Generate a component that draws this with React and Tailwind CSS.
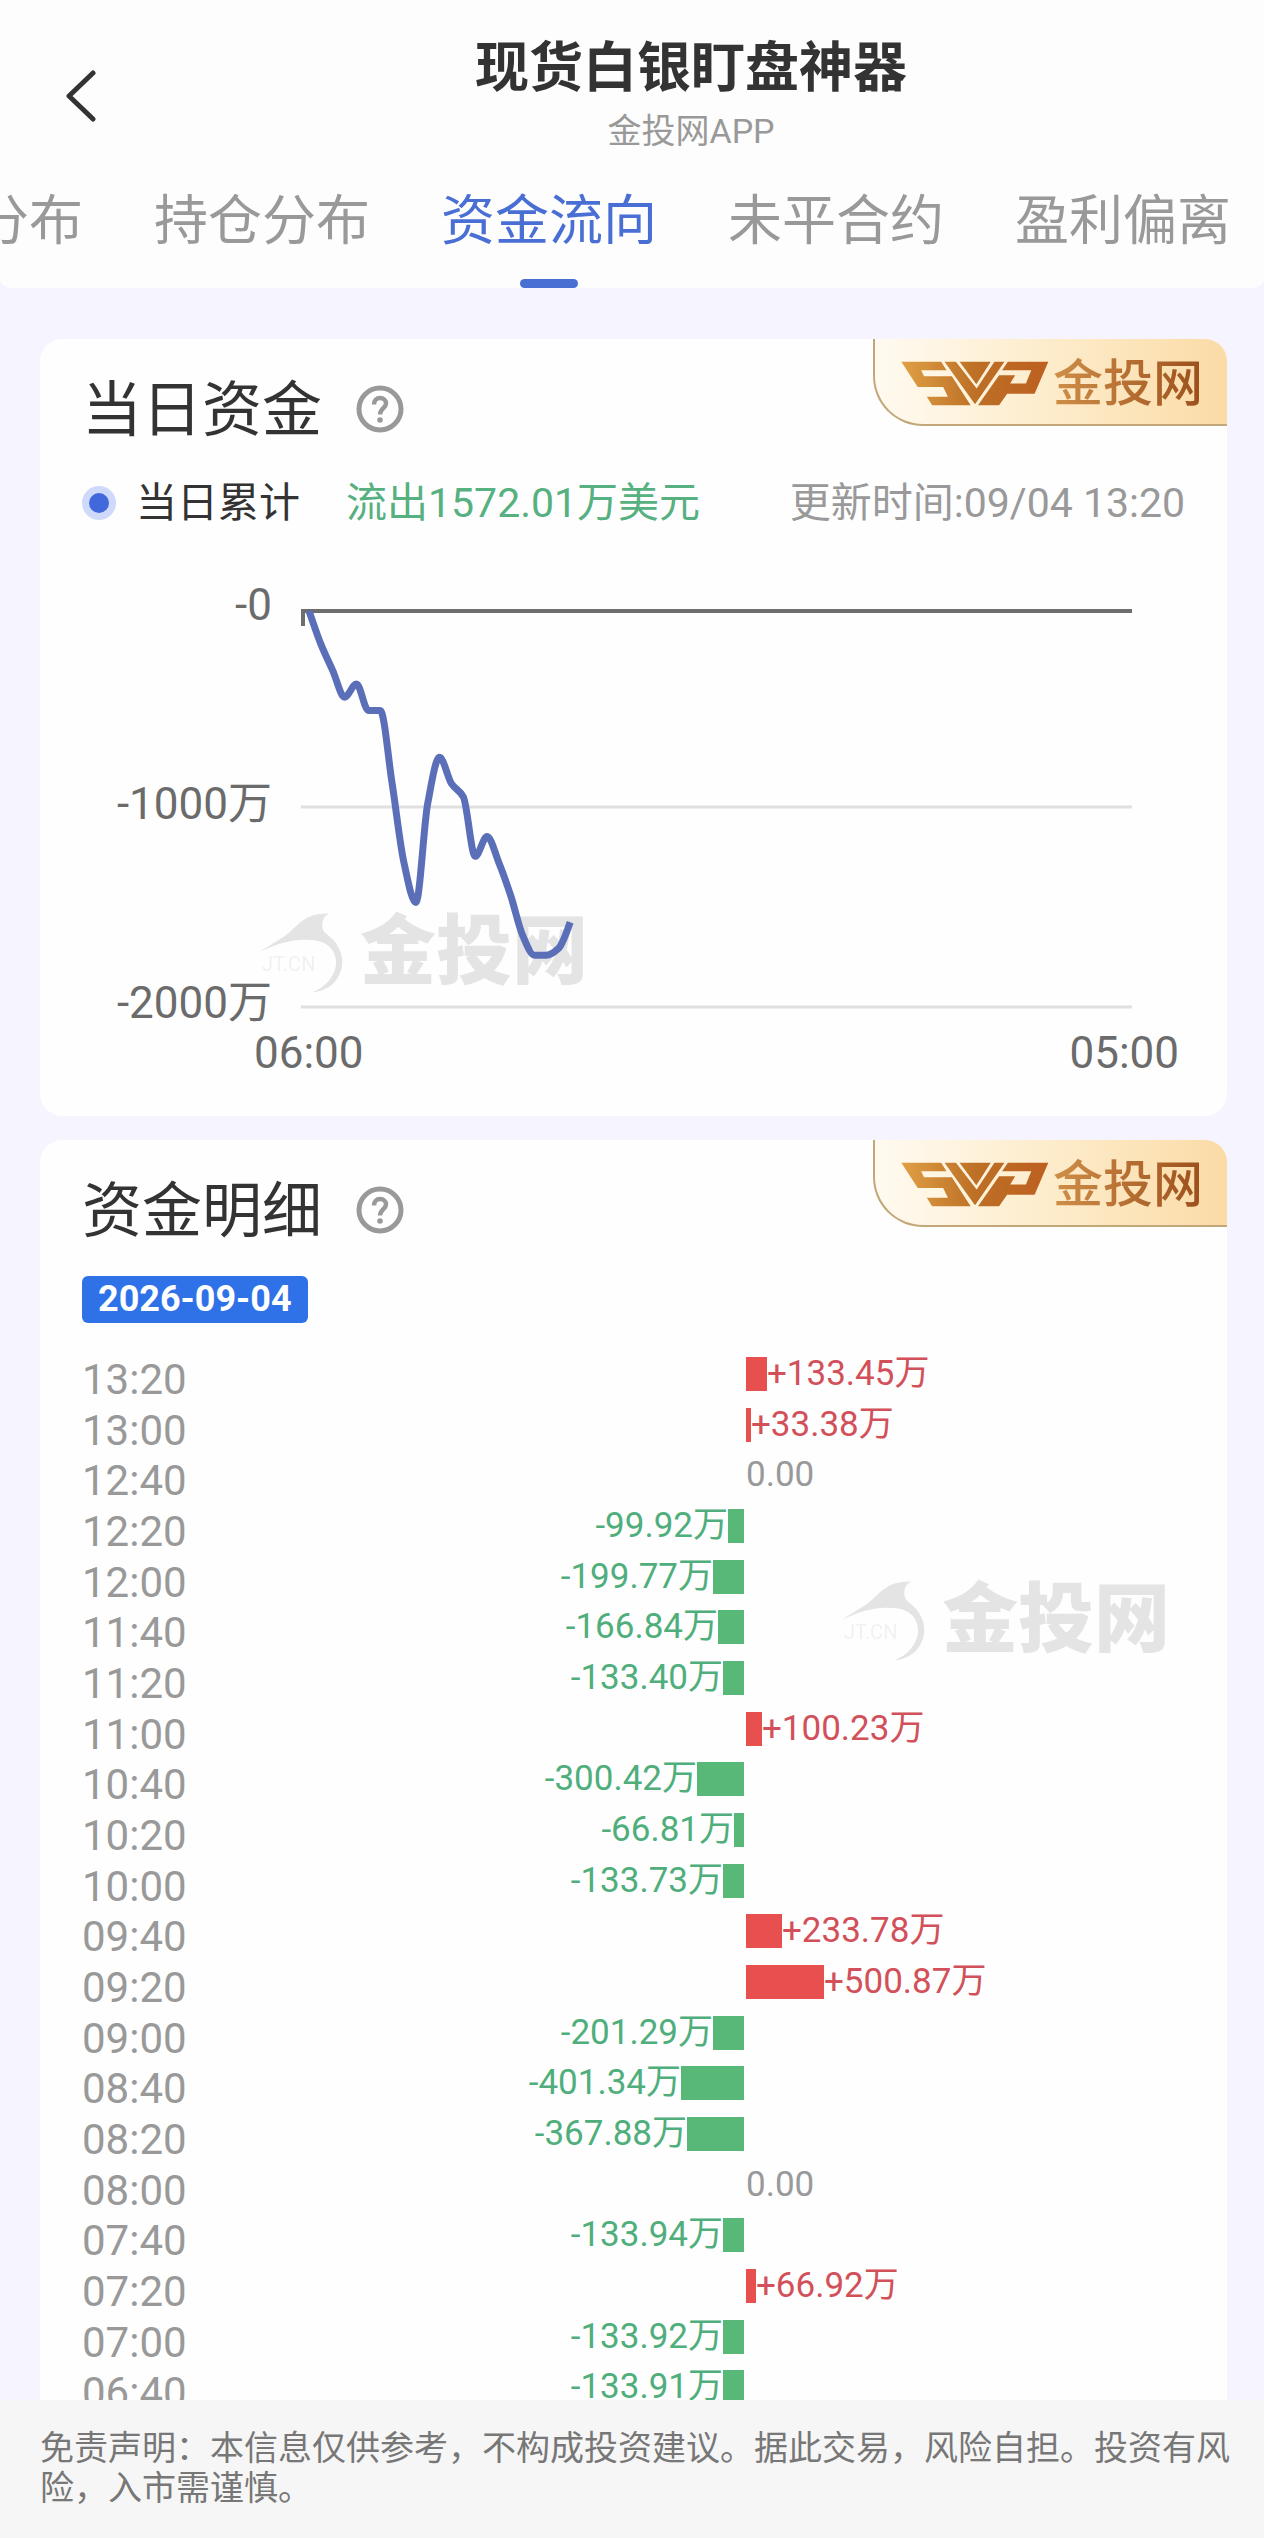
import React, { useState } from 'react';

const TABS = ['分布', '持仓分布', '资金流向', '未平合约', '盈利偏离'];

// newest first, unit: 万
const FLOWS = [
  { time: '13:20', value: 133.45 },
  { time: '13:00', value: 33.38 },
  { time: '12:40', value: 0 },
  { time: '12:20', value: -99.92 },
  { time: '12:00', value: -199.77 },
  { time: '11:40', value: -166.84 },
  { time: '11:20', value: -133.4 },
  { time: '11:00', value: 100.23 },
  { time: '10:40', value: -300.42 },
  { time: '10:20', value: -66.81 },
  { time: '10:00', value: -133.73 },
  { time: '09:40', value: 233.78 },
  { time: '09:20', value: 500.87 },
  { time: '09:00', value: -201.29 },
  { time: '08:40', value: -401.34 },
  { time: '08:20', value: -367.88 },
  { time: '08:00', value: 0 },
  { time: '07:40', value: -133.94 },
  { time: '07:20', value: 66.92 },
  { time: '07:00', value: -133.92 },
  { time: '06:40', value: -133.91 },
];

// running totals from 06:00 on
const TOTALS = [0, -167.47];
[...FLOWS].reverse().forEach((f) => {
  TOTALS.push(TOTALS[TOTALS.length - 1] + f.value);
});

const STEP = 831 / 70;
const POINTS = TOTALS.map((v, i) => [8 + i * STEP, 2 - v * 0.198]);

// monotone cubic, so the curve never overshoots a data point
const smoothPath = (pts) => {
  const slopes = pts.slice(1).map((p, i) => (p[1] - pts[i][1]) / (p[0] - pts[i][0]));
  const tangents = pts.map((_, i) => {
    if (i === 0) return slopes[0];
    if (i === pts.length - 1) return slopes[i - 1] * 1.3;
    const a = slopes[i - 1];
    const b = slopes[i];
    return a * b <= 0 ? 0 : (2 * a * b) / (a + b);
  });
  let d = `M${pts[0][0]},${pts[0][1]}`;
  for (let i = 1; i < pts.length; i++) {
    const [x0, y0] = pts[i - 1];
    const [x1, y1] = pts[i];
    const h = (x1 - x0) / 3;
    d += ` C${x0 + h},${y0 + tangents[i - 1] * h} ${x1 - h},${y1 - tangents[i] * h} ${x1},${y1}`;
  }
  return d;
};

const VipBadge = ({ id }) => (
  <div className="absolute top-0 right-0 flex h-[87px] w-[354px] items-center rounded-bl-[50px] border-b-2 border-l-2 border-[#c2a878] bg-gradient-to-r from-[#fffaf0] via-[#fdeccb] to-[#fbdba6] pt-1 pl-[26px]">
    <svg className="h-[45px] w-[148px] shrink-0" viewBox="32 35 442 132" preserveAspectRatio="none" aria-hidden="true">
      <defs>
        <linearGradient id={id} x1="32" y1="0" x2="474" y2="0" gradientUnits="userSpaceOnUse">
          <stop offset="0" stopColor="#e0a045" />
          <stop offset="0.5" stopColor="#bd7026" />
          <stop offset="1" stopColor="#bd5f20" />
        </linearGradient>
      </defs>
      <g fill={`url(#${id})`}>
        <path d="M33 37H152L168 62H92L101 80H184L240 165H125L109 140H172L158 111H82Z" />
        <path d="M162 37H196L258 116L311 37H341L253 162Z" />
        <path d="M207 37H300L257 103Z" />
        <path d="M351 37H472L431 131H349L325 165H262L325 77H373L358 101H405L421 62H334Z" />
      </g>
    </svg>
    <span className="ml-1 bg-gradient-to-r from-[#cf8f48] to-[#9c4f1c] bg-clip-text text-[50px] leading-[60px] font-medium text-transparent">金投网</span>
  </div>
);

const Watermark = ({ className }) => (
  <div className={`pointer-events-none absolute flex items-center text-[#dedede] opacity-80 ${className}`}>
    <div className="relative">
      <svg className="h-[84px] w-[86px]" viewBox="20 30 260 240" preserveAspectRatio="none" fill="currentColor" aria-hidden="true">
        <path d="M25 150C55 130 80 120 110 98C140 75 160 38 235 40C212 52 212 72 217 88C228 104 250 110 262 135C280 165 278 195 262 222C248 246 220 262 185 265C225 250 252 220 256 185C258 150 235 125 200 118C140 108 85 122 25 150Z" />
      </svg>
      <span className="absolute top-[42px] left-1 text-[20px] leading-6 whitespace-nowrap opacity-50">JT.CN</span>
    </div>
    <span className="ml-4 text-[76px] leading-[80px] font-black">金投网</span>
  </div>
);

const CardTitle = ({ children }) => (
  <div className="flex items-center gap-[34px]">
    <h2 className="pt-1 text-[60px] leading-[60px] text-[#333]">{children}</h2>
    <button type="button" aria-label={`${children}说明`}>
      <svg className="size-[48px]" viewBox="0 0 48 48" fill="none" stroke="#999" strokeWidth="5" aria-hidden="true">
        <circle cx="24" cy="24" r="21" />
        <path d="M18 19.5C18 15.500 20.500 13 24 13S30 15.500 30 18.500C30 23 24 23.500 24 29.500" strokeWidth="4.500" />
        <circle cx="24" cy="35" r="2.800" fill="#999" stroke="none" />
      </svg>
    </button>
  </div>
);

const FlowRow = ({ time, value }) => {
  const width = Math.round(Math.abs(value) * 0.156);
  return (
    <li className="grid grid-cols-[200px_462px_1fr] items-start text-[35px] leading-[50px]">
      <time className="pt-[6px] text-[42px] text-[#999]">{time}</time>
      <div className="flex items-center justify-end text-[#4fae7b]">
        {value < 0 && (
          <>
            <span>{value.toFixed(2)}万</span>
            <span className="h-[34px] bg-[#57b877]" style={{ width }} />
          </>
        )}
      </div>
      <div className="flex items-center pl-[2px] text-[#d2505a]">
        {value > 0 && (
          <>
            <span className="h-[34px] bg-[#e8504f]" style={{ width }} />
            <span>+{value.toFixed(2)}万</span>
          </>
        )}
        {value === 0 && <span className="text-[#999]">0.00</span>}
      </div>
    </li>
  );
};

const App = () => {
  const [activeTab, setActiveTab] = useState('资金流向');

  return (
    <div className="flex h-screen flex-col overflow-hidden bg-[#f5f4ff] font-[Roboto,'Noto_Sans_CJK_SC',sans-serif]">
      <header className="shrink-0 rounded-b-[10px] bg-[#fdfdfd]">
        <div className="flex items-center pt-[34px]">
          <button type="button" aria-label="返回" className="flex w-[118px] justify-center pl-[44px]">
            <svg className="h-[52px] w-[32px]" viewBox="0 0 32 52" fill="none" stroke="#333" strokeWidth="5" strokeLinecap="round" strokeLinejoin="round" aria-hidden="true">
              <path d="M28 3L4 26L28 49" />
            </svg>
          </button>
          <div className="flex-1 text-center">
            <h1 className="text-[54px] leading-[70px] font-bold text-[#333]">现货白银盯盘神器</h1>
            <p className="text-[34px] leading-[54px] text-[#999]">金投网APP</p>
          </div>
        </div>
        <nav className="flex justify-end gap-[71px] overflow-hidden pt-[29px] pr-[33px]">
          {TABS.map((tab) => (
            <button
              key={tab}
              type="button"
              onClick={() => setActiveTab(tab)}
              className={`flex shrink-0 flex-col items-center text-[54px] leading-[70px] ${activeTab === tab ? 'text-[#4a6fd4]' : 'text-[#999]'}`}
            >
              {tab}
              <span className={`mt-[22px] h-[9px] w-[58px] rounded-full ${activeTab === tab ? 'bg-[#4a6fd4]' : ''}`} />
            </button>
          ))}
        </nav>
      </header>

      <main className="flex min-h-0 flex-1 flex-col gap-6 overflow-hidden pt-[51px] pr-[37px] pl-10">
        <section className="relative shrink-0 overflow-hidden rounded-[22px] bg-[#fefefe] px-[42px] pt-[38px] pb-[43px]">
          <VipBadge id="vip-today" />
          <CardTitle>当日资金</CardTitle>
          <div className="mt-[32px] flex items-center text-[41px] leading-[60px]">
            <span className="flex size-[34px] items-center justify-center rounded-full bg-[#cfdafa]">
              <span className="size-5 rounded-full bg-[#4169dc]" />
            </span>
            <span className="ml-[20px] text-[#333]">当日累计</span>
            <span className="ml-[46px] text-[#57b07f]">流出1572.01万美元</span>
            <span className="ml-auto text-[#999]">更新时间:09/04 13:20</span>
          </div>

          <div className="relative mt-[52px] text-[44px] leading-[40px] text-[#6b6b6b]">
            <Watermark className="top-[325px] left-[176px]" />
            <div className="relative flex">
              <div className="flex h-[438px] w-[190px] shrink-0 flex-col justify-between text-right">
                <span>-0</span>
                <span>-1000万</span>
                <span>-2000万</span>
              </div>
              <svg className="mt-[24px] mr-[53px] ml-[29px] h-[400px] min-w-0 flex-1 overflow-visible" viewBox="0 0 831 400" preserveAspectRatio="none" fill="none" aria-label="当日累计资金曲线">
                <path d="M0 198H831M0 398H831" stroke="#e0e0e0" strokeWidth="3" />
                <path d="M2 17V2H831" stroke="#6e6e6e" strokeWidth="4" />
                <path d={smoothPath(POINTS)} stroke="#5a6fb8" strokeWidth="7" strokeLinejoin="round" />
              </svg>
            </div>
            <div className="mt-[10px] flex justify-between pr-[6px] pl-[172px]">
              <span>06:00</span>
              <span>05:00</span>
            </div>
          </div>
        </section>

        <section className="relative shrink-0 overflow-hidden rounded-t-[22px] bg-[#fefefe] px-[42px] pt-[38px]">
          <VipBadge id="vip-detail" />
          <CardTitle>资金明细</CardTitle>
          <span className="mt-[34px] block w-fit rounded-[6px] bg-[#2f72e8] px-4 text-[36px] leading-[47px] font-bold text-white">2026-09-04</span>
          <div className="relative mt-[26px]">
            <ul className="grid h-[1064px] auto-rows-fr">
              {FLOWS.map((flow) => (
                <FlowRow key={flow.time} {...flow} />
              ))}
            </ul>
            <Watermark className="top-[229px] left-[758px]" />
          </div>
        </section>
      </main>

      <footer className="shrink-0 bg-[#f6f6f6] pt-[28px] pr-8 pb-[30px] pl-10">
        <p className="text-[34px] leading-[40px] text-[#777]">
          免责声明：本信息仅供参考，不构成投资建议。据此交易，风险自担。投资有风险，入市需谨慎。
        </p>
      </footer>
    </div>
  );
};

export default App;
